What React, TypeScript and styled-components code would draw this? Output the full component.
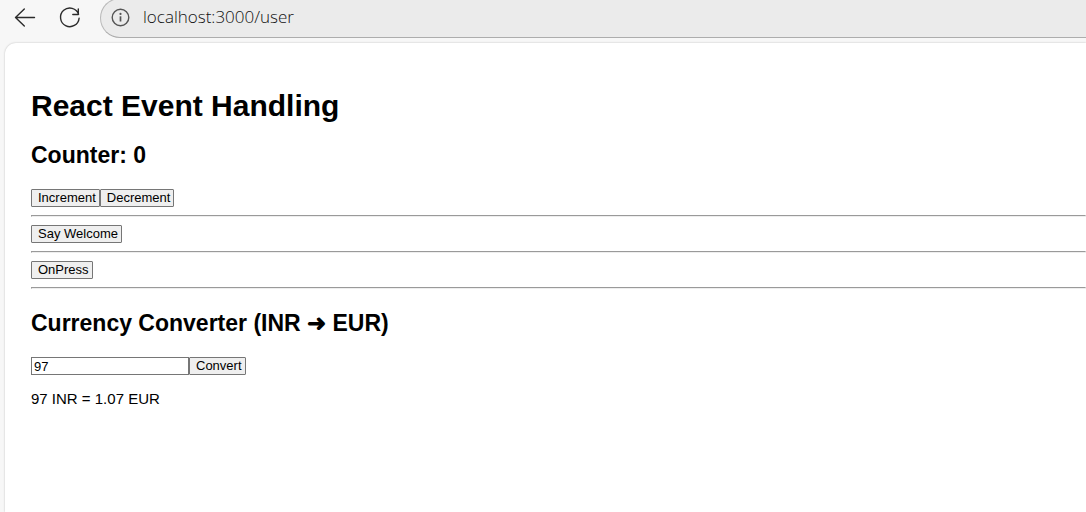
import React, { useState } from "react";
import styled, { createGlobalStyle } from "styled-components";

const GlobalStyle = createGlobalStyle`
  * { box-sizing: border-box; }
  body {
    margin: 0;
    background: #f7f7f7;
    color: #000;
    font-family: "Liberation Sans", Arial, sans-serif;
    overflow-x: hidden;
  }
`;

const Browser = styled.div`
  display: flex;
  flex-direction: column;
  min-height: 100vh;
`;

const Toolbar = styled.header`
  display: flex;
  align-items: flex-end;
  height: 43px;
  padding: 0 0 5px 12px;
  overflow: hidden;
`;

const ToolButton = styled.button`
  display: flex;
  flex: none;
  align-items: center;
  justify-content: center;
  width: 26px;
  height: 26px;
  margin: 0 19px 7px 0;
  padding: 0;
  border: 0;
  background: none;
  color: #2b2b2b;

  &:last-of-type {
    margin-right: 17px;
  }
`;

const AddressBar = styled.div`
  display: flex;
  flex: 1;
  align-items: center;
  gap: 13px;
  height: 40px;
  padding: 0 0 2px 10px;
  border: 1px solid #b9b9b9;
  border-right: 0;
  border-bottom-color: #adadad;
  border-radius: 20px 0 0 20px;
  background: #ebebeb;
`;

const Address = styled.input`
  flex: 1;
  min-width: 0;
  height: 26px;
  padding: 0;
  border: 0;
  outline: 0;
  background: transparent;
  color: #111;
  font: 300 17px/26px "Open Sans", "Noto Sans", sans-serif;
`;

const Page = styled.main`
  flex: 1;
  margin-left: 5px;
  padding: 46px 0 24px 26px;
  border-radius: 11px 0 0 0;
  background: #fff;
  box-shadow: 0 0 2px rgba(0, 0, 0, 0.25);
`;

const Title = styled.h1`
  margin: 0 0 19px;
  font-size: 30px;
  line-height: 34px;
`;

const Subtitle = styled.h2`
  margin: 0 0 21px;
  font-size: 23px;
  line-height: 26px;
`;

const Row = styled.div`
  display: flex;
`;

const Divider = styled.hr`
  height: 2px;
  margin: 8px 0;
  border: 1px solid;
  border-color: #9a9a9a #eee #eee #9a9a9a;
`;

const Section = styled.section`
  padding-top: 13px;
`;

const Button = styled.button`
  height: 18px;
  padding: 0 3px 0 6px;
  border: 1px solid #767676;
  border-radius: 1px;
  background: #efefef;
  color: #000;
  font: 13px/16px "Liberation Sans", Arial, sans-serif;
`;

const Amount = styled.input`
  width: 158px;
  height: 18px;
  padding: 0 2px;
  border: 1px solid #767676;
  border-radius: 0;
  background: #fff;
  font: 13px/16px "Liberation Sans", Arial, sans-serif;
`;

const Result = styled.p`
  margin: 15px 0 0;
  font-size: 15px;
  line-height: 18px;
`;

const BackIcon = () => (
  <svg width="26" height="26" viewBox="0 0 26 26" fill="none" stroke="currentColor" strokeWidth="1.4" strokeLinecap="round" strokeLinejoin="round" aria-hidden="true">
    <path d="M22.5 12.5H3.5M12.3 4L3.5 12.5L12.3 21" />
  </svg>
);

const ReloadIcon = () => (
  <svg width="26" height="26" viewBox="0 0 26 26" fill="none" stroke="currentColor" strokeWidth="1.4" strokeLinecap="round" strokeLinejoin="round" aria-hidden="true">
    <path d="M21.6 9.2A9.3 9.3 0 1 0 22.1 13.2M21.3 4V9.5H15.8" />
  </svg>
);

const InfoIcon = () => (
  <svg width="19" height="19" viewBox="0 0 19 19" fill="none" stroke="#555" strokeWidth="1.4" aria-hidden="true">
    <circle cx="9.5" cy="9.5" r="8.3" />
    <path d="M9.5 8.3V13.5" strokeWidth="1.7" />
    <circle cx="9.5" cy="5.9" r="1.1" fill="#555" stroke="none" />
  </svg>
);

export default function App() {
  const [count, setCount] = useState(0);
  const [amount, setAmount] = useState("97");
  const [result, setResult] = useState("97 INR = 1.07 EUR");

  const convert = () =>
    setResult(`${amount} INR = ${(Number(amount) * 0.011).toFixed(2)} EUR`);

  return (
    <Browser>
      <GlobalStyle />
      <Toolbar>
        <ToolButton aria-label="Back"><BackIcon /></ToolButton>
        <ToolButton aria-label="Reload"><ReloadIcon /></ToolButton>
        <AddressBar>
          <InfoIcon />
          <Address aria-label="Address" defaultValue="localhost:3000/user" />
        </AddressBar>
      </Toolbar>
      <Page>
        <Title>React Event Handling</Title>
        <Subtitle>Counter: {count}</Subtitle>
        <Row>
          <Button onClick={() => setCount(count + 1)}>Increment</Button>
          <Button onClick={() => setCount(count - 1)}>Decrement</Button>
        </Row>
        <Divider />
        <Row>
          <Button onClick={() => alert("Welcome")}>Say Welcome</Button>
        </Row>
        <Divider />
        <Row>
          <Button onClick={() => alert("I was clicked")}>OnPress</Button>
        </Row>
        <Divider />
        <Section>
          <Subtitle>Currency Converter (INR ➜ EUR)</Subtitle>
          <Row>
            <Amount aria-label="Amount in INR" value={amount} onChange={(e) => setAmount(e.target.value)} />
            <Button onClick={convert}>Convert</Button>
          </Row>
          <Result>{result}</Result>
        </Section>
      </Page>
    </Browser>
  );
}
